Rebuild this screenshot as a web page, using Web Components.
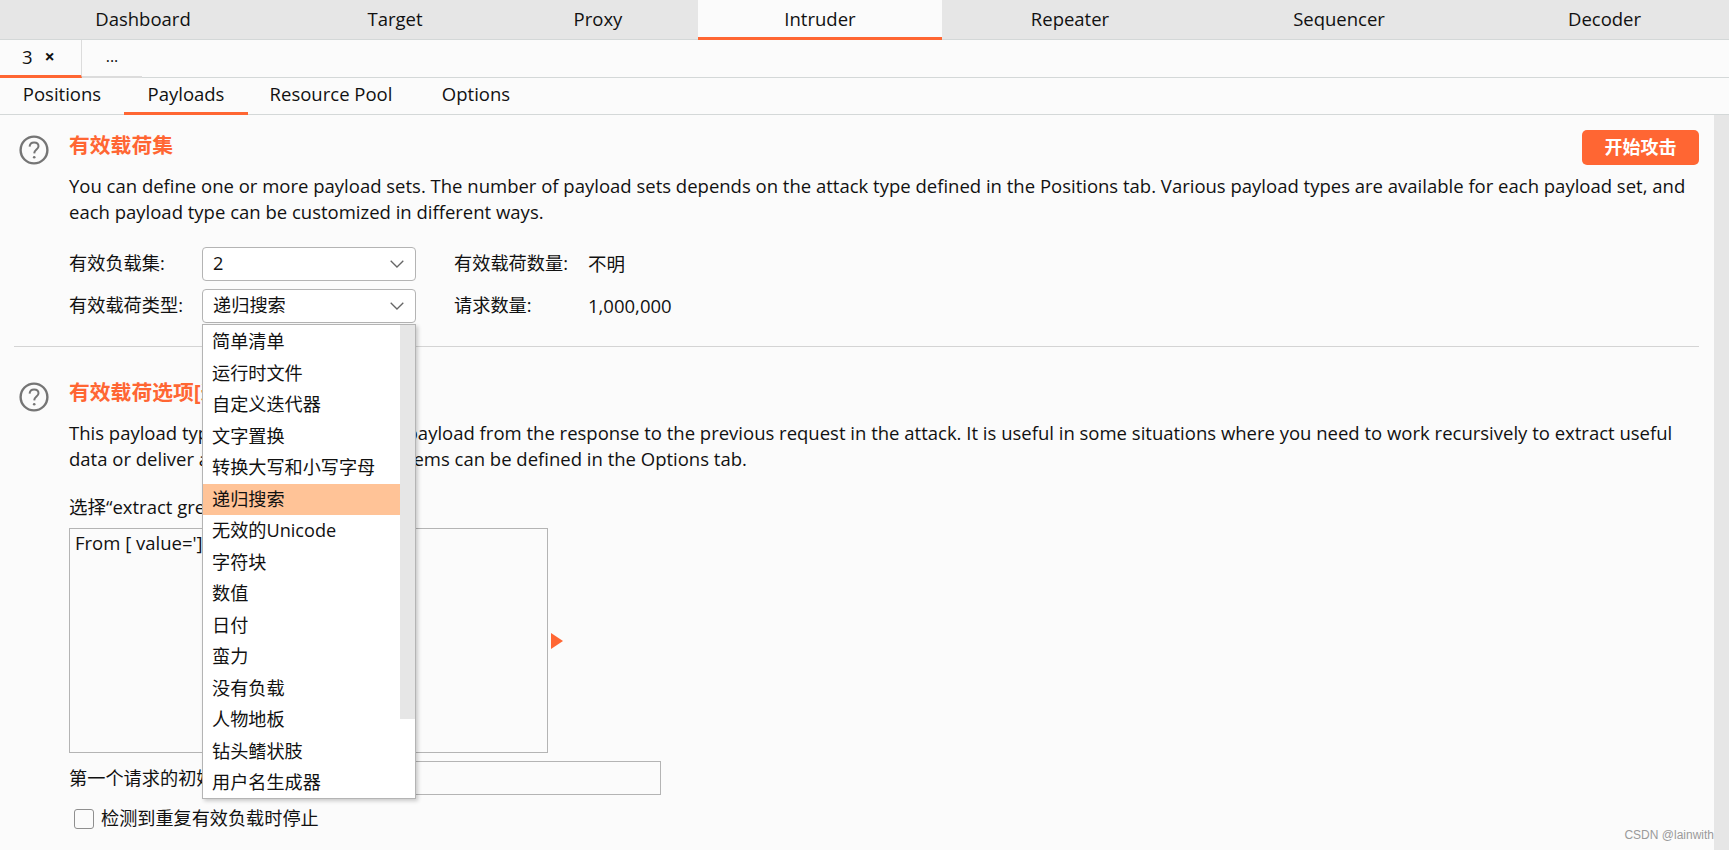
<!DOCTYPE html>
<html lang="zh">
<head>
<meta charset="utf-8">
<title>Intruder</title>
<style>
  html, body { margin: 0; height: 100%; overflow: hidden; }
  body {
    background: #fbfbfb; color: #111;
    font: 18.5px/25px "Open Sans", "Noto Sans CJK SC", sans-serif;
  }
  /* page-level */
  #page { position: relative; height: 850px; display: flex; flex-direction: column; }
</style>
</head>
<body>
<div id="page">
  <burp-tabs level="top" cols="286px 218px 194px 244px 256px 282px 249px" active="3">
    <span>Dashboard</span><span>Target</span><span style="padding-right:6px">Proxy</span><span>Intruder</span><span>Repeater</span><span>Sequencer</span><span>Decoder</span>
  </burp-tabs>
  <burp-subtabs></burp-subtabs>
  <burp-tabs level="inner" cols="124px 124px 166px 124px" active="1">
    <span>Positions</span><span>Payloads</span><span>Resource Pool</span><span>Options</span>
  </burp-tabs>
  <burp-panel>
    <burp-section heading="有效载荷集" action="开始攻击">
      You can define one or more payload sets. The number of payload sets depends on the attack type defined in the Positions tab. Various payload types are available for each payload set, and each payload type can be customized in different ways.
      <burp-form-row slot="extra" label="有效负载集:" value="2" info-label="有效载荷数量:" info="不明"></burp-form-row>
      <burp-form-row slot="extra" label="有效载荷类型:" value="递归搜索" info-label="请求数量:" info="1,000,000"></burp-form-row>
    </burp-section>
    <hr-line></hr-line>
    <burp-section heading="有效载荷选项[递归搜索]">
      This payload type lets you extract each payload from the response to the previous request in the attack. It is useful in some situations where you need to work recursively to extract useful data or deliver an exploit. Extract grep items can be defined in the Options tab.
      <burp-grep slot="extra"></burp-grep>
    </burp-section>
  </burp-panel>
  <burp-dropdown selected="递归搜索"></burp-dropdown>
  <burp-watermark>CSDN @lainwith</burp-watermark>
</div>

<script>
const ORANGE = '#ff6633';

function tpl(html) {
  const t = document.createElement('template');
  t.innerHTML = html;
  return t;
}

class BurpElement extends HTMLElement {
  mount(template) {
    this.attachShadow({ mode: 'open' }).appendChild(template.content.cloneNode(true));
    return this.shadowRoot;
  }
}

const TABS = tpl(`
  <style>
    :host { display: block; flex: none; }
    .bar { display: grid; box-sizing: border-box; }
    ::slotted(span) { display: flex; align-items: center; justify-content: center; box-sizing: border-box; }
    :host([level="top"]) .bar { height: 40px; background: #e6e6e6; border-bottom: 1px solid #d4d8d8; }
    :host([level="top"]) ::slotted(span) { height: 40px; padding-bottom: 3px; }
    :host([level="top"]) ::slotted(.on) { background: #fbfbfb; box-shadow: inset 0 -3px 0 ${ORANGE}; }
    :host([level="inner"]) .bar { height: 37px; background: #fbfbfb; border-bottom: 1px solid #d4d8d8; justify-content: start; }
    :host([level="inner"]) ::slotted(span) { height: 37px; padding-bottom: 6px; }
    :host([level="inner"]) ::slotted(.on) { box-shadow: inset 0 -3px 0 ${ORANGE}; }
  </style>
  <div class="bar"><slot></slot></div>
`);

customElements.define('burp-tabs', class extends BurpElement {
  connectedCallback() {
    const root = this.mount(TABS);
    root.querySelector('.bar').style.gridTemplateColumns = this.getAttribute('cols');
    const items = [...this.querySelectorAll('span')];
    items[+this.getAttribute('active')].classList.add('on');
  }
});

const SUBTABS = tpl(`
  <style>
    :host { display: block; flex: none; }
    .bar { display: flex; box-sizing: border-box; height: 38px; border-bottom: 1px solid #d4d8d8; background: #fbfbfb; }
    .tab { box-sizing: border-box; height: 38px; display: flex; align-items: center; }
    .one { width: 82px; padding: 0 0 2px 22px; gap: 12px; border-right: 1px solid #dcdcdc; border-bottom: 3px solid ${ORANGE}; }
    .one b { font-size: 18px; font-weight: 700; }
    .two { width: 60px; justify-content: center; padding-bottom: 3px; border-bottom: 2px solid #dcdcdc; font-size: 16px; }
  </style>
  <div class="bar">
    <div class="tab one"><span>3</span><b>×</b></div>
    <div class="tab two">...</div>
  </div>
`);
customElements.define('burp-subtabs', class extends BurpElement {
  connectedCallback() { this.mount(SUBTABS); }
});

const PANEL = tpl(`
  <style>
    :host { display: block; flex: 1; position: relative; min-height: 0; }
    .wrap { display: flex; height: 100%; }
    .body { flex: 1; min-width: 0; padding: 15px 15px 0 14px; box-sizing: border-box; }
    .track { width: 15px; background: #e6e6e6; flex: none; }
  </style>
  <div class="wrap"><div class="body"><slot></slot></div><div class="track"></div></div>
`);
customElements.define('burp-panel', class extends BurpElement {
  connectedCallback() { this.mount(PANEL); }
});

const SECTION = tpl(`
  <style>
    :host { display: grid; grid-template-columns: 55px 1fr; }
    .help { width: 30px; height: 30px; margin: 5px 0 0 5px; }
    h2 { margin: 0; height: 30px; font-size: 20.8px; line-height: 30px; font-weight: 700; color: ${ORANGE}; display: flex; justify-content: space-between; align-items: flex-start; }
    button {
      all: unset; flex: none; width: 117px; height: 35px; border-radius: 5px; background: ${ORANGE}; color: #fff;
      font-size: 18px; font-weight: 700; line-height: 35px; text-align: center;
    }
    p { margin: 13px 0 0; line-height: 25.5px; }
    .extra { margin-top: 23px; }
  </style>
  <svg class="help" viewBox="0 0 30 30" fill="none" stroke="#757575">
    <circle cx="15" cy="15" r="13.4" stroke-width="2.4"/>
    <path d="M10.6 11.6c.2-2.7 2-4.2 4.5-4.2 2.6 0 4.4 1.6 4.4 3.8 0 3.3-4.2 3.5-4.3 7.2" stroke-width="2"/>
    <circle cx="15.2" cy="22.3" r="1.3" fill="#757575" stroke="none"/>
  </svg>
  <div>
    <h2><span class="t"></span></h2>
    <p><slot></slot></p>
    <div class="extra"><slot name="extra"></slot></div>
  </div>
`);
customElements.define('burp-section', class extends BurpElement {
  connectedCallback() {
    const root = this.mount(SECTION);
    root.querySelector('.t').textContent = this.getAttribute('heading');
    if (this.hasAttribute('action')) {
      const btn = document.createElement('button');
      btn.textContent = this.getAttribute('action');
      root.querySelector('h2').appendChild(btn);
    }
  }
});

const ROW = tpl(`
  <style>
    :host { display: grid; grid-template-columns: 133px 214px 38px 134px auto; align-items: center; height: 34px; margin-bottom: 8px; justify-content: start; font-size: 18.2px; }
    .sel {
      box-sizing: border-box; height: 34px; border: 1px solid #b4b4b4; border-radius: 4px; background: #fff;
      padding: 0 11px 0 10px; display: flex; align-items: center; justify-content: space-between;
    }
    svg { width: 14px; height: 8px; }
    .gap { grid-column: 3; }
    .l, .il, .i, .v { padding-bottom: 2px; }
    .i { font-size: 18.5px; }
  </style>
  <span class="l"></span>
  <div class="sel"><span class="v"></span>
    <svg viewBox="0 0 14 8" fill="none" stroke="#666" stroke-width="1.3"><path d="M.7.7 7 7 13.3.7"/></svg>
  </div>
  <span class="gap"></span>
  <span class="il"></span>
  <span class="i"></span>
`);
customElements.define('burp-form-row', class extends BurpElement {
  connectedCallback() {
    const root = this.mount(ROW);
    root.querySelector('.l').textContent = this.getAttribute('label');
    root.querySelector('.v').textContent = this.getAttribute('value');
    root.querySelector('.il').textContent = this.getAttribute('info-label');
    root.querySelector('.i').textContent = this.getAttribute('info');
  }
});

const GREP = tpl(`
  <style>
    :host { display: block; }
    .pick { display: block; margin-top: 1px; }
    .area { display: flex; align-items: center; margin-top: 9px; }
    .box { box-sizing: border-box; width: 479px; height: 225px; border: 1px solid #b4b4b4; background: #fbfbfb; padding: 1px 5px; }
    .arrow { margin-left: 3px; width: 0; height: 0; border-left: 12px solid ${ORANGE}; border-top: 8px solid transparent; border-bottom: 8px solid transparent; }
    .init { display: flex; align-items: center; height: 34px; margin-top: 8px; }
    .init span { width: 220px; white-space: nowrap; font-size: 18.2px; }
    .field { box-sizing: border-box; width: 372px; height: 34px; border: 1px solid #b4b4b4; background: #fbfbfb; }
    .chk { display: flex; align-items: center; gap: 7px; margin: 11px 0 0 5px; font-size: 18.15px; }
    .chk i { box-sizing: border-box; width: 20px; height: 20px; border: 1px solid #8f8f8f; border-radius: 3px; background: #fbfbfb; }
  </style>
  <span class="pick">选择“extract grep”项目:</span>
  <div class="area">
    <div class="box">From [ value='] to ['/&gt;]</div>
    <div class="arrow"></div>
  </div>
  <div class="init"><span>第一个请求的初始有效载荷:</span><div class="field"></div></div>
  <div class="chk"><i></i><span>检测到重复有效负载时停止</span></div>
`);
customElements.define('burp-grep', class extends BurpElement {
  connectedCallback() { this.mount(GREP); }
});

customElements.define('hr-line', class extends BurpElement {
  connectedCallback() {
    this.attachShadow({ mode: 'open' }).innerHTML =
      '<style>:host{display:block;height:1px;background:#d4d4d4;margin:15px 0 30px}</style>';
  }
});

const OPTIONS = ['简单清单','运行时文件','自定义迭代器','文字置换','转换大写和小写字母','递归搜索','无效的Unicode','字符块','数值','日付','蛮力','没有负载','人物地板','钻头鳍状肢','用户名生成器'];

const DROPDOWN = tpl(`
  <style>
    /* floats over the form, like the real popup */
    :host { display: block; position: absolute; left: 202px; top: 324px; width: 214px; height: 475px; box-sizing: border-box; font-size: 18.15px; }
    .menu { height: 100%; box-sizing: border-box; background: #fff; border: 1px solid #b4b4b4; box-shadow: 2px 2px 4px rgba(0,0,0,.2); display: grid; grid-template-columns: 1fr 15px; }
    ul { list-style: none; margin: 0; padding: 1px 0 0; }
    li { height: 31.5px; line-height: 30.4px; padding-left: 9px; white-space: nowrap; }
    li.on { background: #ffc397; }
    .thumb { height: 394px; background: #e6e6e6; }
  </style>
  <div class="menu"><ul></ul><div class="thumb"></div></div>
`);
customElements.define('burp-dropdown', class extends BurpElement {
  connectedCallback() {
    const root = this.mount(DROPDOWN);
    const list = root.querySelector('ul');
    const selected = this.getAttribute('selected');
    OPTIONS.forEach(text => {
      const li = document.createElement('li');
      li.textContent = text;
      if (text === selected) li.className = 'on';
      list.appendChild(li);
    });
  }
});

const MARK = tpl(`
  <style>
    :host { display: block; position: absolute; right: 15px; top: 827px; font: 12px/16px "Liberation Sans", Arial, sans-serif; color: #9a9a9a; }
  </style>
  <slot></slot>
`);
customElements.define('burp-watermark', class extends BurpElement {
  connectedCallback() { this.mount(MARK); }
});
</script>
</body>
</html>
